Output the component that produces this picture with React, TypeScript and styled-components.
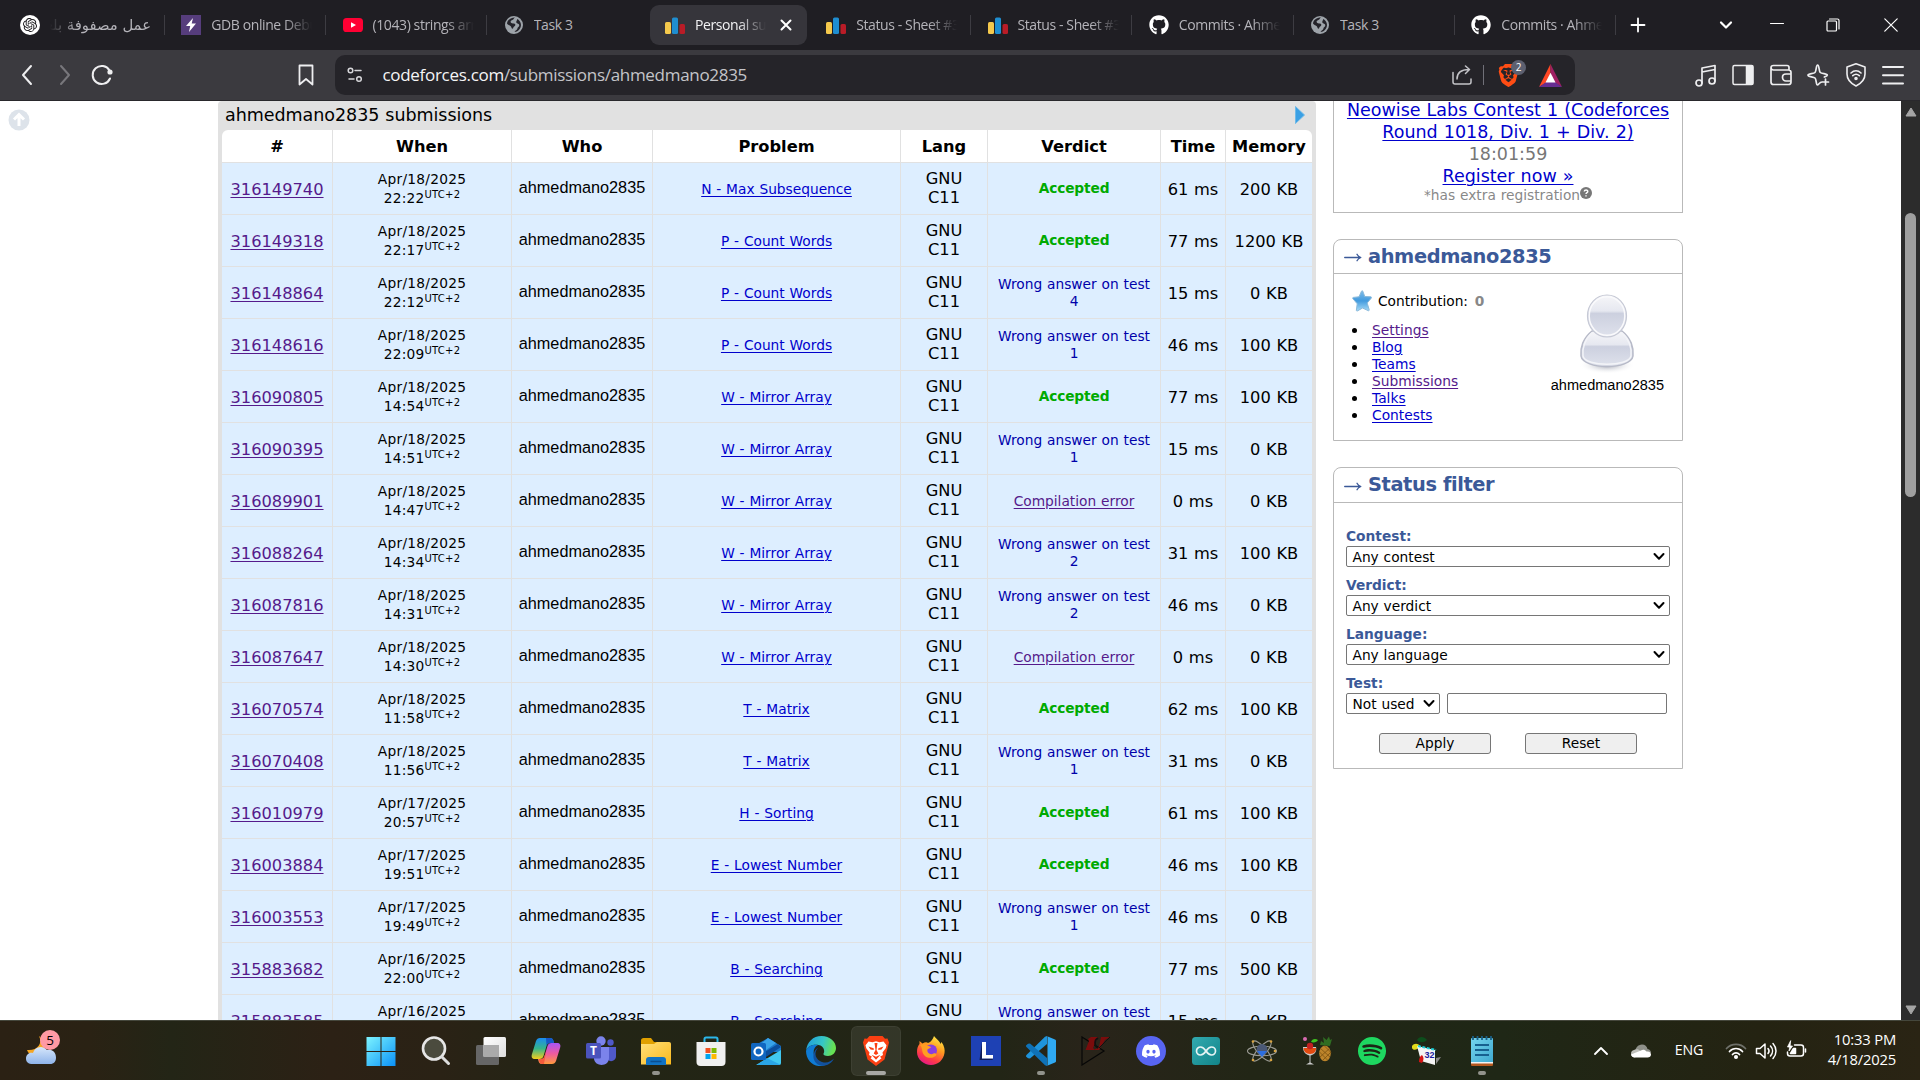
import React from 'react';
import styled, { createGlobalStyle, css } from 'styled-components';
import { FaGithub, FaSpotify } from 'react-icons/fa';
import { SiOpenai, SiBrave, SiDiscord } from 'react-icons/si';

const ui = '"Open Sans", "Noto Sans", "DejaVu Sans", sans-serif';
const verdana = 'Verdana, "DejaVu Sans", sans-serif';
const arial = 'Arial, "Liberation Sans", sans-serif';

const Global = createGlobalStyle`
  * { box-sizing: border-box; }
  html, body { margin: 0; padding: 0; background: #fff; overflow: hidden; }
  svg { display: block; flex: none; }
`;

const Screen = styled.div`
  width: 1920px; height: 1080px; display: flex; flex-direction: column; overflow: hidden;
`;

/* ---------- browser chrome ---------- */
const TabStrip = styled.div`
  height: 50px; background: #1f1e23; display: flex; align-items: center; padding-left: 3.5px;
  font-family: ${ui}; flex: none;
`;
const TabSlot = styled.div<{ $line?: boolean }>`
  width: 161.25px; height: 20px; flex: none; display: flex; align-items: center;
  border-right: 1px solid ${p => (p.$line ? '#3d3c42' : 'transparent')};
`;
const TabBody = styled.div<{ $active?: boolean }>`
  height: 40px; width: 157px; flex: none; margin-left: 1.5px; padding-left: 15px; border-radius: 9px;
  display: flex; align-items: center; gap: 10px;
  background: ${p => (p.$active ? '#36353b' : 'transparent')};
  color: ${p => (p.$active ? '#f2f2f4' : '#b5b4ba')};
`;
const TabTitle = styled.div<{ $w: number; $rtl?: boolean; $fade?: boolean }>`
  width: ${p => p.$w}px; overflow: hidden; white-space: nowrap; font-size: 14px; line-height: 22px;
  letter-spacing: -0.4px;
  direction: ${p => (p.$rtl ? 'rtl' : 'ltr')};
  ${p => p.$rtl && css`font-family: "DejaVu Sans", sans-serif; font-size: 14.8px; letter-spacing: 0;`}
  ${p => p.$fade && css`mask-image: linear-gradient(${p.$rtl ? 'to left' : 'to right'}, #000 calc(100% - 28px), transparent 100%);`}
`;
const TabClose = styled.div`margin-left: 4px;`;
const WindowButtons = styled.div`
  flex: 1; display: flex; align-items: center;
`;
const IconSlot = styled.div<{ $w: number }>`
  width: ${p => p.$w}px; display: flex; justify-content: center; align-items: center; flex: none;
`;
const Toolbar = styled.div`
  height: 51px; background: #3b3a3f; border-bottom: 1px solid #29282c; display: flex; align-items: center; flex: none;
`;
const NavButtons = styled.div`
  width: 335px; display: flex; align-items: center; padding-left: 8px;
`;
const Spacer = styled.div<{ $w?: number }>`
  ${p => (p.$w ? css`width: ${p.$w}px; flex: none;` : css`flex: 1;`)}
`;
const AddressBar = styled.div`
  width: 1240px; height: 40px; border-radius: 10px; background: #252429; display: flex; align-items: center;
  font-family: ${ui}; font-size: 17px; color: #c4c4c8; letter-spacing: -0.3px; padding: 0 13px 0 12px;
`;
const UrlText = styled.div`margin-left: 19.5px; flex: 1; line-height: 24px; white-space: nowrap;`;
const Host = styled.span`color: #f5f5f6;`;
const VLine = styled.div`width: 1px; height: 20px; background: #707078; margin: 0 13px 0 11px;`;
const ShieldWrap = styled.div`position: relative; width: 23px; margin-right: 19px;`;
const ShieldCount = styled.div`
  position: absolute; left: 14px; top: -4px; width: 15px; height: 15px; border-radius: 8px;
  background: #5d6070; color: #fff; font-size: 10px; line-height: 15px; text-align: center; letter-spacing: 0;
`;
const ToolIcons = styled.div`display: flex; align-items: center; margin-left: 112px;`;

/* ---------- page ---------- */
const Viewport = styled.div`
  height: 919px; flex: none; overflow: hidden; display: flex; align-items: flex-start; background: #fff; font-family: ${verdana};
  word-spacing: 0.03em;
`;
const Gutter = styled.div`width: 218px; flex: none; padding: 8px 0 0 8px;`;
const DataTable = styled.div`
  width: 1098px; flex: none; background: #e1e1e1; padding: 0 4px; border-radius: 4px 4px 0 0;
`;
const TableTitle = styled.div`
  height: 29px; display: flex; align-items: center; justify-content: space-between; padding: 0 7px 2px 3px;
  font-size: 17.5px; line-height: 22px; color: #000; letter-spacing: -0.04px;
`;
const Rows = styled.div`border-radius: 6px 6px 0 0; overflow: hidden;`;
const columns = '111px 179px 141px 248px 87px 173px 65px 86px';
const Row = styled.div`
  display: grid; grid-template-columns: ${columns}; height: 52px; background: #ddeeff;
`;
const HeadRow = styled(Row)`height: 33px; background: #fff; font-weight: bold;`;
const Cell = styled.div<{ $last?: boolean; $small?: boolean; $drop?: boolean }>`
  border-bottom: 1px solid #e1e1e1; ${p => !p.$last && css`border-right: 1px solid #e1e1e1;`}
  display: flex; flex-direction: column; align-items: center; justify-content: center; text-align: center; white-space: nowrap;
  font-size: ${p => (p.$small ? 13.75 : 16.25)}px; line-height: ${p => (p.$small ? 17 : 19)}px; color: #000;
  padding-top: ${p => (p.$drop ? 2 : 0)}px;
`;
const WhoCell = styled(Cell)`font-family: ${arial}; padding-bottom: 2px;`;
const WhenCell = styled(Cell)`line-height: 19px; letter-spacing: 0.25px; padding-top: 1px;`;
const LangCell = styled(Cell)`padding-bottom: 2px;`;
const Sup = styled.sup`font-size: 10px; line-height: 0; vertical-align: 5.2px;`;
const Link = styled.a<{ $visited?: boolean }>`
  color: ${p => (p.$visited ? '#551a8b' : '#0000cc')}; text-decoration: underline; text-underline-offset: 2px; text-decoration-thickness: 1px;
`;
const Accepted = styled.span`color: #0a0; font-weight: bold; letter-spacing: -0.15px;`;
const Wrong = styled.span`color: #0000aa;`;

const Sidebar = styled.div`width: 350px; margin-left: 17px; display: flex; flex-direction: column; flex: none;`;
const ContestBox = styled.div`
  height: 112px; border: 1px solid #b9b9b9; border-top: 0; margin-bottom: 26px;
`;
const ContestText = styled.div`
  margin-top: -2px; text-align: center; color: #777; font-size: 17.5px; line-height: 22px; white-space: nowrap;
`;
const ExtraNote = styled.div`
  display: flex; justify-content: center; font-size: 13.75px; line-height: 17px; color: #888;
`;
const Panel = styled.div<{ $h: number }>`
  height: ${p => p.$h}px; border: 1px solid #b9b9b9; border-radius: 8px 8px 0 0; margin-bottom: 26px;
`;
const PanelTitle = styled.div<{ $h: number }>`
  height: ${p => p.$h}px; border-bottom: 1px solid #b9b9b9; display: flex; align-items: center; gap: 6px;
  color: #3b5998; font-weight: bold; font-size: 19.4px; padding: 0 0 1px 10px; word-spacing: 0; letter-spacing: -0.4px;
`;
const ProfileBody = styled.div`display: flex; justify-content: space-between; padding: 16px 18px 0 18px;`;
const Contribution = styled.div`
  display: flex; align-items: center; font-size: 13.75px; gap: 6px; height: 22px; color: #000;
`;
const Zero = styled.b`color: #888; margin-left: 2px;`;
const Menu = styled.ul`margin: 10px 0 0; padding: 0 0 0 19px; font-size: 13.8px; line-height: 17px; list-style: none;`;
const MenuItem = styled.li`
  display: flex; align-items: center; margin-left: -18px; gap: 14px;
  &::before { content: ''; width: 5px; height: 5px; border-radius: 3px; background: #000; margin-left: -1px; margin-right: 1px; }
`;
const Avatar = styled.div`
  display: flex; flex-direction: column; align-items: center; font-family: ${arial}; font-size: 14.55px; line-height: 18px; padding-top: 4px;
`;
const FilterBody = styled.div`padding: 25px 12px 0; font-size: 13.75px;`;
const Field = styled.div`display: flex; flex-direction: column; height: 49px;`;
const Label = styled.label`color: #3b5998; font-weight: bold; line-height: 17px; height: 18px;`;
const SelectBox = styled.div<{ $w: number }>`
  width: ${p => p.$w}px; height: 21px; border: 1px solid #767676; border-radius: 2px; background: #fff;
  display: flex; align-items: center; justify-content: space-between; padding: 1px 4px 0 5.500px; line-height: 18px; white-space: nowrap;
`;
const TestRow = styled.div`display: flex; gap: 7px;`;
const TextInput = styled.input`
  width: 220px; height: 21px; border: 1px solid #767676; border-radius: 2px; padding: 0 4px; background: #fff;
`;
const Buttons = styled.div`display: flex; gap: 34px; padding: 19px 0 0 33px;`;
const FormButton = styled.button`
  width: 112px; height: 21px; border: 1px solid #767676; border-radius: 3px; background: #efefef;
  font: 13.75px/19px ${verdana}; padding: 0; color: #000;
`;
const Scrollbar = styled.div`
  width: 19px; height: 919px; background: #2c2c2c; margin-left: auto; flex: none; display: flex; flex-direction: column; align-items: center;
  padding: 6px 0 5px;
`;
const Thumb = styled.div`width: 11px; height: 284px; border-radius: 6px; background: #9f9f9f; margin-top: 96px;`;

/* ---------- taskbar ---------- */
const Taskbar = styled.div`
  height: 60px; flex: none; border-top: 1px solid #45473c; display: flex; align-items: center; font-family: ${ui}; color: #fff;
  background: linear-gradient(90deg, #2b2114 0, #2a2214 90px, #232516 170px, #2c2115 330px, #2a2215 440px, #232515 560px, #222516 1000px, #29241a 1090px, #222616 1250px, #1f2716 1500px, #242312 1760px, #2a2414 1920px);
`;
const Weather = styled.div`width: 353.5px; padding-left: 25px; flex: none;`;
const WeatherArt = styled.div`margin-top: -6px;`;
const AppSlot = styled.div<{ $active?: boolean }>`
  width: 50px; height: 50px; margin: 0 2.52px; border-radius: 6px; flex: none; display: flex; flex-direction: column; align-items: center;
  padding-top: 10px; background: ${p => (p.$active ? 'rgba(255,255,255,0.08)' : 'transparent')};
  ${p => p.$active && css`box-shadow: inset 0 0 0 1px rgba(255,255,255,0.05);`}
`;
const Mark = styled.div<{ $wide?: boolean }>`
  width: ${p => (p.$wide ? 20 : 8)}px; height: 4px; border-radius: 2px; margin-top: 5px; background: ${p => (p.$wide ? '#a8a8a4' : '#92938c')};
`;
const Tray = styled.div`margin-left: auto; display: flex; align-items: center; padding-right: 24px; font-size: 14.5px;`;
const Lang = styled.div`width: 62px; text-align: center; font-size: 14.2px; letter-spacing: -0.2px; margin-top: -2px;`;
const Clock = styled.div`text-align: right; line-height: 20px; width: 84px; font-size: 14.8px; letter-spacing: -0.2px; white-space: nowrap; margin-top: -3px;`;

/* ---------- drawings ---------- */
type Ln = { s?: number; c?: string; w?: number; children: React.ReactNode; vb?: number };
const Line = ({ s = 24, c = '#eeeef0', w = 1.7, vb = 24, children }: Ln) => (
  <svg width={s} height={s} viewBox={`0 0 ${vb} ${vb}`} fill="none" stroke={c} strokeWidth={w} strokeLinecap="round" strokeLinejoin="round">{children}</svg>
);

const CfIcon = () => (
  <svg width="20" height="20" viewBox="0 0 20 20">
    <rect x="0" y="7" width="6" height="12" rx="1.5" fill="#f5c94c" />
    <rect x="7" y="2.5" width="6" height="16.5" rx="1.5" fill="#1f8ed0" />
    <rect x="14.5" y="9" width="5.5" height="10" rx="1.5" fill="#b91c27" />
  </svg>
);
const GlobeIcon = () => (
  <svg width="18" height="18" viewBox="0 0 18 18">
    <circle cx="9" cy="9" r="9" fill="#9da3a9" />
    <path d="M10 1.5c-1.8 1-1 2-2.6 2.6C6 4.600 5 5.500 6 6.800c1 1 3 .3 4 1.200.8 1 .2 1.800-.8 2.400-1.200.6-.6 2-1.800 2.400-1.200-.6-.8-2-1.900-2.800C4.500 9.200 2.600 8.800 2 7.500 2.400 4 5.500 1.500 10 1.500zM12 3c2 .8 4 3 4 6 0 3.500-3 7-6.500 7 .5-1.500 2.800-1.800 3-3.800.1-1.200 1.800-1.400 1.800-3C14.300 7.600 12 7.900 11.300 6.600 10.800 5.200 12.400 4.500 12 3z" fill="#24232a" />
  </svg>
);
const GptIcon = () => (
  <svg width="20" height="20" viewBox="0 0 20 20"><circle cx="10" cy="10" r="10" fill="#fff" /><SiOpenai x="3" y="3" size={14} color="#17161a" /></svg>
);
const BoltIcon = () => (
  <svg width="20" height="20" viewBox="0 0 20 20"><path d="M0 0h20v20H0z" fill="#563d7c" /><path d="M12 3L5 11h4.200L8 17l7-8.500h-4.300z" fill="#fff" /></svg>
);
const YtIcon = () => (
  <svg width="20" height="20" viewBox="0 0 20 20"><rect y="3" width="20" height="14" rx="3.600" fill="#ff0033" /><path d="M8 7.200v5.600l5-2.800z" fill="#fff" /></svg>
);
const Caret = () => <Line s={12} vb={12} c="#000" w={2}><path d="M1.500 3L6 7.700l4.500-4.700" /></Line>;

const BatIcon = () => (
  <svg width="23" height="23" viewBox="0 0 23 20" preserveAspectRatio="none">
    <path d="M11.500 0L0 20l11.500-6z" fill="#ff4724" /><path d="M11.500 0L23 20l-11.500-6z" fill="#9e1f63" /><path d="M0 20h23l-11.500-7z" fill="#662d91" /><path d="M11.500 7.500l5 8.500h-10z" fill="#fff" />
  </svg>
);
const StarIcon = () => (
  <svg width="20" height="22" viewBox="0 0 20 22">
    <defs><linearGradient id="st" x1="0" y1="0" x2="0" y2="1"><stop offset="0" stopColor="#7fbce8" /><stop offset=".5" stopColor="#439bde" /><stop offset="1" stopColor="#a8dcf8" /></linearGradient></defs>
    <path d="M9.500 1.200c.4-.7 1-.7 1.300.1l2 5.200 6 .3c.8.1 1 .8.4 1.400l-4 4.800 2 6.800c.1.800-.4 1.200-1.100.8L10.500 18l-5 2.900c-.7.300-1.200 0-1.100-.8l.8-6.300L.9 8.700c-.5-.6-.3-1.200.5-1.300L7 6.800z" fill="url(#st)" stroke="#8ab9da" strokeLinejoin="round" />
  </svg>
);
const AvatarIcon = () => (
  <svg width="70" height="82" viewBox="0 0 70 82">
    <defs>
      <linearGradient id="av" x1="0" y1="0" x2="0" y2="1"><stop offset="0" stopColor="#f6f6f9" /><stop offset=".38" stopColor="#e6e8f0" /><stop offset=".44" stopColor="#ccd0df" /><stop offset="1" stopColor="#dfe2ec" /></linearGradient>
      <radialGradient id="sh"><stop offset="0" stopColor="#999dab" /><stop offset="1" stopColor="#fff" stopOpacity="0" /></radialGradient>
    </defs>
    <ellipse cx="35" cy="71" rx="28" ry="9" fill="url(#sh)" />
    <path d="M20 37C11 44 8 54 9 62c2 14 50 14 52 0 1-8-2-18-11-25z" fill="url(#av)" stroke="#b7bac8" strokeWidth="1.500" />
    <path d="M20 39C13 45 10 54 11 62c2 11 46 11 48 0 1-8-2-17-9-23z" fill="none" stroke="#f3f4f8" strokeWidth="1.500" />
    <ellipse cx="35" cy="22" rx="19.500" ry="21" fill="url(#av)" stroke="#c6c9d5" strokeWidth="1.200" />
    <ellipse cx="35" cy="22" rx="17.800" ry="19.300" fill="none" stroke="#fafafc" strokeWidth="1.500" />
  </svg>
);

const A = ({ children }: { children: React.ReactNode }) => <svg width="30" height="30" viewBox="0 0 30 30">{children}</svg>;
const G = ({ id, a, b, c }: { id: string; a: string; b: string; c?: string }) => (
  <linearGradient id={id} x1="0" y1="0" x2="1" y2="1"><stop offset="0" stopColor={a} />{c && <stop offset=".5" stopColor={c} />}<stop offset="1" stopColor={b} /></linearGradient>
);

const WindowsApp = () => <A><G id="w" a="#7df3ff" b="#0a90f8" c="#43c3fb" /><path d="M.5 1h14v14H.5zM15.500 1h14v14h-14zM.5 16h14v14H.5zM15.500 16h14v14h-14z" fill="url(#w)" /></A>;
const SearchApp = () => <A><circle cx="13" cy="12.500" r="11" fill="#4b4b3e" stroke="#e6e6e6" strokeWidth="2.600" /><path d="M21 21l6.500 6.500" stroke="#dcdcdc" strokeWidth="3" strokeLinecap="round" /></A>;
const TaskViewApp = () => <A><G id="tv" a="#fff" b="#ddd" /><rect x="0" y="9" width="23" height="20" rx="1.500" fill="#666" /><rect x="7.500" y="1" width="22.500" height="20" rx="1.500" fill="url(#tv)" /><path d="M7.500 9H23v12H7.500z" fill="#aaa" /></A>;
const CopilotApp = () => (
  <A>
    <defs><linearGradient id="c1" x1="0" y1="0" x2="0" y2="1"><stop offset="0" stopColor="#1a8bf0" /><stop offset=".5" stopColor="#35b58c" /><stop offset="1" stopColor="#f3cd1c" /></linearGradient>
      <linearGradient id="c2" x1="0" y1="0" x2="0" y2="1"><stop offset="0" stopColor="#a855f7" /><stop offset=".5" stopColor="#ee5aa0" /><stop offset="1" stopColor="#ff9a3c" /></linearGradient></defs>
    <path d="M9 2h10c2 0 3 1 3.500 3l.5 2h-4c-2 0-3 1-3.500 3l-3 10c-.7 2-1.700 3-4 3H4c-3 0-4-2-3-5L5 5c.8-2 2-3 4-3z" fill="url(#c1)" />
    <path d="M21 28H11c-2 0-3-1-3.500-3L7 23h3c2 0 3-1 3.500-3l3-10c.7-2 1.700-3 4-3H26c3 0 4 2 3 5l-4 13c-.8 2-2 3-4 3z" fill="url(#c2)" />
    <path d="M15 2h4c2 0 3 1 3.500 3l.5 2h-4c-2 0-3 1-3.500 3z" fill="#1657c8" /><path d="M8 23h2c2 0 3-1 3.500-3l1.500-4-2 12h-2c-2 0-3-2-3-5z" fill="#f55b3c" />
  </A>
);
const TeamsApp = () => (
  <A><circle cx="15" cy="5" r="4.700" fill="#7b83eb" /><circle cx="24.500" cy="6.500" r="3.200" fill="#5059c9" /><path d="M19 11h11v9c0 5-6 7-9 3z" fill="#5059c9" /><path d="M8 11h15v11c0 9-14 9-15 1z" fill="#7b83eb" /><rect y="7" width="15" height="15.500" rx="1.500" fill="#4b53bc" />
    <text x="7.500" y="19" textAnchor="middle" fontFamily={ui} fontWeight="700" fontSize="12" fill="#fff">T</text></A>
);
const FolderApp = () => <A><G id="fo" a="#ffe07a" b="#fbb91c" /><path d="M0 4.500C0 3 1 2 2.500 2H10l3 4h14v8H0z" fill="#e0a000" /><path d="M0 8h13l3-2h12c1.200 0 2 .8 2 2v20.500H0z" fill="url(#fo)" /><path d="M5 29v-5c0-2 1-3 3-3h14c2 0 3 1 3 3v5z" fill="#1173c4" /><path d="M9.500 25.500h11" stroke="#0b4f91" strokeWidth="1.500" /></A>;
const StoreApp = () => <A><path d="M8.500 7V3c0-1 .5-1.500 1.500-1.500h10c1 0 1.500.5 1.500 1.500v4" fill="none" stroke="#2bb7ea" strokeWidth="2" /><path d="M.5 6h29v20c0 2.500-1.500 4-4 4h-21c-2.500 0-4-1.500-4-4z" fill="#f0f0f0" /><path d="M9.500 12h5v5h-5z" fill="#f25022" /><path d="M15.500 12h5v5h-5z" fill="#7fba00" /><path d="M9.500 18h5v5h-5z" fill="#00a4ef" /><path d="M15.500 18h5v5h-5z" fill="#ffb900" /></A>;
const OutlookApp = () => (
  <A><path d="M3 10L17 2l13 8v6H3z" fill="#1c78c9" /><path d="M17 2l8 5-14 10V7z" fill="#38a3e8" /><path d="M30 10v17c0 1-1 2-2 2H5l25-15z" fill="#41c8f0" /><path d="M30 11L15 21l-3-4 15-9z" fill="#0a4d9c" /><path d="M16 22l14 7H6z" fill="#2aa5e6" /><rect y="7" width="15" height="17" rx="1.500" fill="#1066c0" />
    <circle cx="7.500" cy="15.500" r="4" fill="none" stroke="#fff" strokeWidth="2.200" /></A>
);
const EdgeApp = () => (
  <A><defs><linearGradient id="e1" x1="0" y1="0" x2="1" y2=".2"><stop offset="0" stopColor="#1e9bde" /><stop offset=".6" stopColor="#36c6c6" /><stop offset="1" stopColor="#67e152" /></linearGradient></defs>
    <path d="M0 15C1 6 7 0 15.500 0 24 0 30 6 30 12c0 5-4 8-8 8-3.500 0-5-1-4.500-2.500C19 16 18.500 10 12.500 9 6 8 1 11 0 15z" fill="url(#e1)" />
    <path d="M0 15c1-4 6-7 12-6-4 2-5 6-4 10 1 5 6 9 11 10-10 4-19-4-19-14z" fill="#0f7bd4" />
    <path d="M12 12c-5 5-2 12 4 14 5 1.500 9-.5 12-3.500-2 4.500-7 7.500-12 7.300C9 29 6 22 8 17c.8-2.500 2-4 4-5z" fill="#12519c" /></A>
);
const BraveApp = () => (
  <A><path d="M8.500 0h13l2.500 2.800 2.500-.3 1.500 4-1 4-3.500 13L15 30l-8.500-6.500L3 10.500l-1-4 1.500-4 2.500.3z" fill="#fb3f12" />
    <path d="M7.500 5.500l4 .8 3.500-1 3.500 1 4-.8 3 3.800-.8 3-3.200 4.200.5 2.500-3 1.800 1.500 1.500L15 26.500l-5.500-4.200 1.500-1.500-3-1.800.5-2.500-3.200-4.200-.8-3z" fill="#fff" />
    <path d="M7.500 10.500l5.200 1.700v1.800l-3.200-.5zM22.500 10.500l-5.200 1.700v1.800l3.200-.5zM13.500 7h3l-1 7 1.800 3.500L15 19l-2.300-1.500L14.500 14zM10.500 18.700L15 20.800l4.500-2.100-4.500 5z" fill="#fb3f12" /></A>
);
const FirefoxApp = () => (
  <A><defs><linearGradient id="ff" x1=".8" y1="0" x2=".3" y2="1"><stop offset="0" stopColor="#fff24a" /><stop offset=".4" stopColor="#ff9a1f" /><stop offset=".75" stopColor="#ff3b47" /><stop offset="1" stopColor="#e3168c" /></linearGradient></defs>
    <path d="M18 0c2 3 6 5 6.500 8l1-2c3 4 3.500 8 3 11-1 7-6.500 12-13.500 12S1 23.500 1 16c0-4 1-6 2.500-8V5l3 2.500C9 6 11 6 12 7c3-1 5-4 6-7z" fill="url(#ff)" />
    <circle cx="15" cy="14.500" r="6" fill="#8a3fe0" /><path d="M4 9c3-2 6-1 7.500 1 2 0 3 .5 3.500 1.500-1 1-3 1-3.500 2-1 3 3 6 6 4 2-1 4 1 2 2.500-5 4-12 1-13-4-.5-3-.5-5-2.500-7z" fill="#ff9e22" /></A>
);
const LApp = () => <A><path d="M0 0h30v30H0z" fill="#1e41b4" /><path d="M11 6L8.500 24h13l.5-1.500H11z" fill="#111c55" /><path d="M11 6h4v13h7v3.500H11z" fill="#fff" /></A>;
const VscodeApp = () => <A><path d="M21 0v8L4 22.500l-2-.3L0 20.500l.2-1.200L19 .8z" fill="#1e94dc" /><path d="M21 30v-8L4 7.500l-2 .3L0 9.500l.2 1.200L19 29.200z" fill="#0f72b8" /><path d="M20.500 0L29 3.500c.7.300 1 .7 1 1.300v20.400c0 .6-.3 1-1 1.300L20.500 30c.8-.3 1-.8 1-1.500v-27c0-.7-.2-1.200-1-1.500z" fill="#2fa9f2" /></A>;
const SpiceApp = () => <A><path d="M1 1l22 14L1 29z" fill="none" stroke="#070707" strokeWidth="1.200" /><path d="M10 1h7l-5 11 2 2H4.500L8 5l-1-2zM20 1h9l-5 3-6 10h-5l5-3z" fill="#7a0c0c" /><path d="M17 2c-4 2-4 8 0 10" stroke="#111" strokeWidth="1.600" fill="none" /><path d="M18 12L29 1" stroke="#111" /></A>;
const DiscordApp = () => <A><circle cx="15" cy="15" r="15" fill="#5865f2" /><SiDiscord x="6" y="6" size={18} color="#fff" /></A>;
const ArduinoApp = () => <A><G id="ar" a="#32aab0" b="#128489" /><rect x="1" y="1" width="28" height="28" rx="3.500" fill="url(#ar)" /><path d="M15 15c-2-3-3.500-4-5.500-4a4 4 0 000 8c2 0 3.500-1 5.500-4s3.500-4 5.500-4a4 4 0 010 8c-2 0-3.500-1-5.500-4z" fill="none" stroke="#e7f4f4" strokeWidth="1.700" /></A>;
const AtomApp = () => (
  <A><g fill="none" stroke="#9b9b94" strokeWidth="1.100"><ellipse cx="15" cy="15" rx="14.500" ry="4.800" /><ellipse cx="15" cy="15" rx="13" ry="4.200" transform="rotate(48 15 15)" /><ellipse cx="15" cy="15" rx="13" ry="4.200" transform="rotate(-48 15 15)" /></g>
    <circle cx="15" cy="13.500" r="5.500" fill="#4a5876" /><path d="M10 15h10l-5 6z" fill="#2d6fe0" /><g fill="#d9a441"><circle cx="6" cy="5.500" r="1.300" /><circle cx="24" cy="5.500" r="1.300" /><circle cx="6" cy="24" r="1.300" /><circle cx="24" cy="24" r="1.300" /><circle cx="28" cy="15" r="1.300" /></g></A>
);
const FruitApp = () => (
  <A><path d="M18 9l1-4 3 2-1-6 3.500 3L27 .5 28 4l2-1-2 7z" fill="#2f6d22" /><ellipse cx="23" cy="17.500" rx="5.800" ry="7.800" fill="#bd842a" /><path d="M18 12l10 9M17.500 16l8 8M22 9.500l7 7M28 12l-10 9M29 16l-8 8" stroke="#7b5212" strokeWidth=".8" /><path d="M1 11h13c1 4-1 7.500-5.500 8.500v7l3.500 2H4l3.500-2v-7C3 18.500 1 15 1 11z" fill="#ccc" /><path d="M1.500 12h12.500c.5 3-2 6-6 6s-6.500-3-6.500-6z" fill="#e24a10" /><circle cx="8" cy="10" r="3.200" fill="#c22020" /><circle cx="3" cy="3" r="2" fill="#d86bb0" /><path d="M9 6c1-3 4-4 7-2-1 2-4 3-7 2z" fill="#3fc21f" /></A>
);
const SpotifyApp = () => <A><circle cx="15" cy="15" r="13" fill="#1c2616" /><FaSpotify x="0.5" y="0.5" size={29} color="#1ed760" /></A>;
const CardsApp = () => (
  <A><path d="M5 4c2-4 7-4 10 0-3 3-8 3-10 0z" fill="#0d4d1c" /><path d="M0 10c2-3 6-3 8 0-2 4-7 5-8 2z" fill="#e4dc1a" /><path d="M24 28v-6l5-1z" fill="#8a8a8a" /><path d="M5 10l18 4v15L9 25z" fill="#f4f4f4" /><path d="M6 10l18 4" stroke="#22d3dd" strokeWidth="2" strokeDasharray="3 1.500" /><path d="M7 26c0-4 1-6 3-7 2 2 2 5 0 8z" fill="#d61414" />
    <text x="17.500" y="22" textAnchor="middle" fontFamily="Liberation Sans, sans-serif" fontWeight="700" fontSize="9" fill="#1b1b9e">32</text></A>
);
const NotepadApp = () => <A><G id="np" a="#74d4ee" b="#3fa9cf" /><path d="M4 26h22v2.500c0 1-.5 1.500-1.500 1.500h-19c-1 0-1.500-.5-1.500-1.500z" fill="#b5581e" /><rect x="4" y="2" width="22" height="25" rx="1" fill="url(#np)" /><path d="M4 26h22v1.500H4z" fill="#f2f2f2" /><path d="M6 0v4M10.500 0v4M15 0v4M19.500 0v4M24 0v4" stroke="#1a5f86" strokeWidth="1.800" /><path d="M8 9h14M8 14h14M8 19h14" stroke="#17608f" strokeWidth="1.800" /></A>;

const WeatherIcon = () => (
  <svg width="38" height="42" viewBox="0 0 38 42">
    <defs><linearGradient id="cl" x1="0" y1="0" x2="0" y2="1"><stop offset="0" stopColor="#d7e7fb" /><stop offset="1" stopColor="#8fb4ea" /></linearGradient></defs>
    <path d="M14 9c4 8-2 15-12 14 2 5 7 8 12 6 7-2 7-15 0-20z" fill="#f5a623" />
    <path d="M8 26a8 8 0 0114-3c5-1 9 2 9 7.500 0 4-2 6.500-6 6.500H8c-5 0-7-2-7-5.500S4 25 8 26z" fill="url(#cl)" />
    <circle cx="25" cy="13" r="10" fill="#ff99a4" />
    <text x="25" y="18" textAnchor="middle" fontFamily={ui} fontSize="13.500" fill="#000">5</text>
  </svg>
);

/* ---------- data ---------- */
type TabDef = { icon: React.ReactNode; title: string; line?: boolean; active?: boolean; rtl?: boolean };
const tabs: TabDef[] = [
  { icon: <GptIcon />, title: 'عمل مصفوفة بلغة', line: true, rtl: true },
  { icon: <BoltIcon />, title: 'GDB online Debugger', line: true },
  { icon: <YtIcon />, title: '(1043) strings arrays', line: true },
  { icon: <GlobeIcon />, title: 'Task 3' },
  { icon: <CfIcon />, title: 'Personal submissions', active: true },
  { icon: <CfIcon />, title: 'Status - Sheet #3', line: true },
  { icon: <CfIcon />, title: 'Status - Sheet #3', line: true },
  { icon: <FaGithub size={20} color="#fff" />, title: 'Commits · Ahmed', line: true },
  { icon: <GlobeIcon />, title: 'Task 3', line: true },
  { icon: <FaGithub size={20} color="#fff" />, title: 'Commits · Ahmed', line: true },
];

// id, date, time, problem, verdict (A accepted, C compilation error, digit = failed test), ms, KB
const submissions: [string, string, string, string, string, number, number][] = [
  ['316149740', '18', '22:22', 'N - Max Subsequence', 'A', 61, 200],
  ['316149318', '18', '22:17', 'P - Count Words', 'A', 77, 1200],
  ['316148864', '18', '22:12', 'P - Count Words', '4', 15, 0],
  ['316148616', '18', '22:09', 'P - Count Words', '1', 46, 100],
  ['316090805', '18', '14:54', 'W - Mirror Array', 'A', 77, 100],
  ['316090395', '18', '14:51', 'W - Mirror Array', '1', 15, 0],
  ['316089901', '18', '14:47', 'W - Mirror Array', 'C', 0, 0],
  ['316088264', '18', '14:34', 'W - Mirror Array', '2', 31, 100],
  ['316087816', '18', '14:31', 'W - Mirror Array', '2', 46, 0],
  ['316087647', '18', '14:30', 'W - Mirror Array', 'C', 0, 0],
  ['316070574', '18', '11:58', 'T - Matrix', 'A', 62, 100],
  ['316070408', '18', '11:56', 'T - Matrix', '1', 31, 0],
  ['316010979', '17', '20:57', 'H - Sorting', 'A', 61, 100],
  ['316003884', '17', '19:51', 'E - Lowest Number', 'A', 46, 100],
  ['316003553', '17', '19:49', 'E - Lowest Number', '1', 46, 0],
  ['315883682', '16', '22:00', 'B - Searching', 'A', 77, 500],
  ['315883585', '16', '21:59', 'B - Searching', '1', 15, 0],
];

const Verdict = ({ v }: { v: string }) => {
  if (v === 'A') return <Accepted>Accepted</Accepted>;
  if (v === 'C') return <Link $visited>Compilation error</Link>;
  return <><Wrong>Wrong answer on test</Wrong><Wrong>{v}</Wrong></>;
};

const apps: { icon: React.ReactNode; mark?: boolean; active?: boolean }[] = [
  { icon: <WindowsApp /> }, { icon: <SearchApp /> }, { icon: <TaskViewApp /> }, { icon: <CopilotApp /> }, { icon: <TeamsApp /> },
  { icon: <FolderApp />, mark: true }, { icon: <StoreApp /> }, { icon: <OutlookApp /> }, { icon: <EdgeApp /> },
  { icon: <BraveApp />, mark: true, active: true }, { icon: <FirefoxApp /> }, { icon: <LApp /> }, { icon: <VscodeApp />, mark: true },
  { icon: <SpiceApp /> }, { icon: <DiscordApp /> }, { icon: <ArduinoApp /> }, { icon: <AtomApp /> }, { icon: <FruitApp /> },
  { icon: <SpotifyApp /> }, { icon: <CardsApp /> }, { icon: <NotepadApp />, mark: true },
];

const menu: [string, boolean][] = [['Settings', true], ['Blog', false], ['Teams', false], ['Submissions', true], ['Talks', false], ['Contests', false]];

const PanelArrow = () => <Line s={18} vb={18} c="#3b5998" w={1.3}><path d="M.7 10.500h16M13 7.300c.8 1.700 2 2.600 3.800 3.200-1.800.6-3 1.500-3.800 3.200" /></Line>;

export default function App() {
  return (
    <Screen>
      <Global />
      <TabStrip>
        {tabs.map((t, i) => (
          <TabSlot key={i} $line={t.line}>
            <TabBody $active={t.active}>
              <IconSlot $w={20}>{t.icon}</IconSlot>
              <TabTitle $w={t.active ? 71 : 101} $rtl={t.rtl} $fade={t.title !== 'Task 3'}>{t.title}</TabTitle>
              {t.active && <TabClose><Line s={12} vb={12} c="#fff" w={2}><path d="M1.500 1.500l9 9M10.500 1.500l-9 9" /></Line></TabClose>}
            </TabBody>
          </TabSlot>
        ))}
        <WindowButtons>
          <IconSlot $w={44}><Line s={16} vb={16} w={1.800} c="#fff"><path d="M8 1.500v13M1.500 8h13" /></Line></IconSlot>
          <Spacer $w={52} />
          <IconSlot $w={28}><Line s={14} vb={14} w={2.200} c="#fff"><path d="M2 4.500l5 5 5-5" /></Line></IconSlot>
          <Spacer $w={29} />
          <IconSlot $w={16}><Line s={14} vb={14} w={1.100} c="#fff"><path d="M.5 5.500h13" /></Line></IconSlot>
          <Spacer $w={40} />
          <IconSlot $w={16}><Line s={14} vb={14} w={1.200} c="#fff"><rect x="1" y="3" width="9.500" height="10" rx="1" /><path d="M3.500 1h8c1 0 1.500.5 1.500 1.500V11" /></Line></IconSlot>
          <Spacer $w={42} />
          <IconSlot $w={16}><Line s={14} vb={14} w={1.200} c="#fff"><path d="M.8.8l12.400 12.400M13.200.8L.8 13.200" /></Line></IconSlot>
        </WindowButtons>
      </TabStrip>

      <Toolbar>
        <NavButtons>
          <IconSlot $w={38}><Line w={2}><path d="M16 3l-8 9 8 9" /></Line></IconSlot>
          <IconSlot $w={38}><Line w={2} c="#78777c"><path d="M8 3l8 9-8 9" /></Line></IconSlot>
          <IconSlot $w={36}><Line w={2}><path d="M20 15.500a9 9 0 11-.5-8" /><circle cx="20" cy="9" r="1.600" fill="#eee" /></Line></IconSlot>
          <Spacer />
          <IconSlot $w={58}><Line w={1.800}><path d="M5.500 2.500h13v19l-6.500-5.500-6.500 5.500z" /></Line></IconSlot>
        </NavButtons>
        <AddressBar>
          <Line s={16} vb={16} c="#d7d7da" w={1.500}><circle cx="3.500" cy="3.500" r="2.300" /><path d="M8 3.500h6M2 12h5" /><circle cx="12" cy="12" r="2.300" /></Line>
          <UrlText><Host>codeforces.com</Host>/submissions/ahmedmano2835</UrlText>
          <Line s={20} vb={20} c="#c3c3c7" w={1.500}><path d="M1 7.500V17c0 1.200.8 2 2 2h14c1.200 0 2-.8 2-2v-3" /><path d="M5 14c0-6 4-9.500 12-9.500M13.500 1l4 3.500-4 4" /></Line>
          <VLine />
          <ShieldWrap>
            <SiBrave size={23} color="#ff4d14" />
            <ShieldCount>2</ShieldCount>
          </ShieldWrap>
          <BatIcon />
        </AddressBar>
        <ToolIcons>
          <IconSlot $w={37.5}><Line><circle cx="5" cy="20" r="3" /><circle cx="18" cy="18" r="3" /><path d="M8 20V5l13-2.500V18M8 9l13-2.500" /></Line></IconSlot>
          <IconSlot $w={37.5}><Line w={1.500}><rect x="2" y="2.500" width="20" height="19" rx="1.500" /><path d="M15.500 3h6v18h-6z" fill="#eeeef0" /></Line></IconSlot>
          <IconSlot $w={37.5}><Line><path d="M2 5v14c0 1.500 1 2.500 2.500 2.500h15c1.500 0 2.500-1 2.500-2.500V9.500c0-1.500-1-2.500-2.500-2.500H4.500C3 7 2 6.200 2 4.800s1-2.300 2.500-2.300H18c1.500 0 2 1 2 2V7M22 11h-5c-2 0-3.500 1.500-3.500 3.300S15 18 17 18h5" /></Line></IconSlot>
          <IconSlot $w={37.5}><Line><path d="M16 19c-2.500 0-3.500 3-4.500 3-1.500 0-1-5.500-2.500-7-1.500-1.500-7-1-7-2.800S7.500 11 9 9.500s1-7.500 2.600-7.500c1.700 0 1.200 6 2.700 7.500s7 1 7 2.700c0 .8-1.300 1.200-3 1.800M19.500 16v6M16.500 19h6" /></Line></IconSlot>
          <IconSlot $w={37.5}><Line w={1.600}><path d="M12 .8l9 3.200v7c0 5.500-3 9-9 12-6-3-9-6.500-9-12V4zM7 10c3-2.800 7-2.800 10 0M8.800 12.700c2-1.800 4.500-1.800 6.500 0" /><circle cx="12" cy="15.500" r="1" fill="#eee" /></Line></IconSlot>
          <IconSlot $w={37.5}><Line w={2}><path d="M2 4h20M2 12.300h20M2 20.500h20" /></Line></IconSlot>
        </ToolIcons>
      </Toolbar>

      <Viewport>
        <Gutter>
          <svg width="22" height="22" viewBox="0 0 22 22"><circle cx="11" cy="11" r="10.500" fill="#dde3ea" /><path d="M11 17V6M6 10.500l5-5 5 5" fill="none" stroke="#fff" strokeWidth="3" /></svg>
        </Gutter>
        <DataTable>
          <TableTitle>
            ahmedmano2835 submissions
            <svg width="10" height="18" viewBox="0 0 10 18"><path d="M.5.5L9.500 9l-9 8.500z" fill="#3ba0e4" stroke="#6db9e8" /></svg>
          </TableTitle>
          <Rows>
            <HeadRow>
              {['#', 'When', 'Who', 'Problem', 'Lang', 'Verdict', 'Time', 'Memory'].map(h => <Cell key={h} $last={h === 'Memory'}>{h}</Cell>)}
            </HeadRow>
            {submissions.map(([id, day, time, problem, v, ms, kb]) => (
              <Row key={id}>
                <Cell $drop><Link $visited>{id}</Link></Cell>
                <WhenCell $small><span>Apr/{day}/2025</span><span>{time}<Sup>UTC+2</Sup></span></WhenCell>
                <WhoCell>ahmedmano2835</WhoCell>
                <Cell $small $drop><Link>{problem}</Link></Cell>
                <LangCell><span>GNU</span><span>C11</span></LangCell>
                <Cell $small $drop={v === 'C'}><Verdict v={v} /></Cell>
                <Cell $drop>{ms} ms</Cell>
                <Cell $last $drop>{kb} KB</Cell>
              </Row>
            ))}
          </Rows>
        </DataTable>
        <Sidebar>
          <ContestBox>
            <ContestText>
              <Link>Neowise Labs Contest 1 (Codeforces</Link><br />
              <Link>Round 1018, Div. 1 + Div. 2)</Link><br />
              18:01:59<br />
              <Link>Register now »</Link>
              <ExtraNote>
                *has extra registration
                <svg width="12" height="12" viewBox="0 0 12 12"><circle cx="6" cy="6" r="6" fill="#777" /><path d="M4.200 4.500c.2-2 3.600-2 3.600 0 0 1.200-1.800 1.200-1.800 2.500M6 8.300v1.200" fill="none" stroke="#fff" strokeWidth="1.400" /></svg>
              </ExtraNote>
            </ContestText>
          </ContestBox>
          <Panel $h={202}>
            <PanelTitle $h={34}><PanelArrow />ahmedmano2835</PanelTitle>
            <ProfileBody>
              <div>
                <Contribution><StarIcon /><span>Contribution: <Zero>0</Zero></span></Contribution>
                <Menu>{menu.map(([m, v]) => <MenuItem key={m}><Link $visited={v}>{m}</Link></MenuItem>)}</Menu>
              </div>
              <Avatar><AvatarIcon />ahmedmano2835</Avatar>
            </ProfileBody>
          </Panel>
          <Panel $h={302}>
            <PanelTitle $h={35}><PanelArrow />Status filter</PanelTitle>
            <FilterBody>
              <Field><Label>Contest:</Label><SelectBox $w={324}>Any contest<Caret /></SelectBox></Field>
              <Field><Label>Verdict:</Label><SelectBox $w={324}>Any verdict<Caret /></SelectBox></Field>
              <Field><Label>Language:</Label><SelectBox $w={324}>Any language<Caret /></SelectBox></Field>
              <Label as="div">Test:</Label>
              <TestRow><SelectBox $w={94}>Not used<Caret /></SelectBox><TextInput /></TestRow>
              <Buttons><FormButton>Apply</FormButton><FormButton>Reset</FormButton></Buttons>
            </FilterBody>
          </Panel>
        </Sidebar>
        <Scrollbar>
          <svg width="12" height="10" viewBox="0 0 12 10"><path d="M6 1l5 8H1z" fill="#a5a5a5" stroke="#a5a5a5" strokeLinejoin="round" /></svg>
          <Thumb />
          <Spacer />
          <svg width="12" height="10" viewBox="0 0 12 10"><path d="M6 9l5-8H1z" fill="#a5a5a5" stroke="#a5a5a5" strokeLinejoin="round" /></svg>
        </Scrollbar>
      </Viewport>

      <Taskbar>
        <Weather><WeatherArt><WeatherIcon /></WeatherArt></Weather>
        {apps.map((a, i) => (
          <AppSlot key={i} $active={a.active}>{a.icon}{a.mark && <Mark $wide={a.active} />}</AppSlot>
        ))}
        <Tray>
          <Line s={14} vb={14} w={1.800} c="#fff"><path d="M1 10l6-6 6 6" /></Line>
          <Spacer $w={23} />
          <svg width="20" height="14" viewBox="0 0 20 14"><path d="M4 9c0-5 3-8.500 7-8.500 3 0 5 2 5.500 4.500C19 5.500 20 7 20 9z" fill="#8e9089" /><path d="M4 13.500A3.800 3.800 0 013 6c2-1.500 5-1 6.500 1z" fill="#bfc0bb" /><path d="M4 13.500c-2 0-3.500-1-4-3l10-4c1.500-1 4-1 5.500 1 3-.5 4.500 1 4.500 3s-1.500 3-3.500 3z" fill="#fff" /></svg>
          <Spacer $w={7} />
          <Lang>ENG</Lang>
          <Spacer $w={5} />
          <Line s={22} vb={22} w={1.700} c="#fff"><path d="M1.500 8.500c5-5.500 14-5.500 19 0" stroke="#6f716a" /><path d="M4.500 11.500c3.500-4 9.500-4 13 0M7.500 14.500c2-2.300 5-2.300 7 0" /><circle cx="11" cy="17" r="1.200" fill="#fff" /></Line>
          <Spacer $w={8} />
          <Line s={22} vb={22} w={1.500} c="#fff"><path d="M1.500 8.500h3.500L10 4v14l-5-4.500H1.500zM13 8.500c1.300 1.500 1.300 3.500 0 5M15.500 6c2.700 3 2.700 7 0 10M18 3.500c4 4.500 4 10.500 0 15" /></Line>
          <Spacer $w={9} />
          <Line s={21} vb={21} w={1.500} c="#fff"><path d="M8.500 5H15c1.500 0 2.500 1 2.500 2.500v6c0 1.500-1 2.500-2.500 2.500H4c-1.500 0-2.500-1-2.500-2.500V12M19.500 9v3" /><path d="M4.500 1L1.500 7h2.200L3 11l3.500-5H4.300z" fill="#fff" strokeWidth=".8" /><path d="M4.500 13.500l3-5h2v5z" fill="#fff" /></Line>
          <Spacer $w={5} />
          <Clock>10:33 PM<br />4/18/2025</Clock>
        </Tray>
      </Taskbar>
    </Screen>
  );
}
